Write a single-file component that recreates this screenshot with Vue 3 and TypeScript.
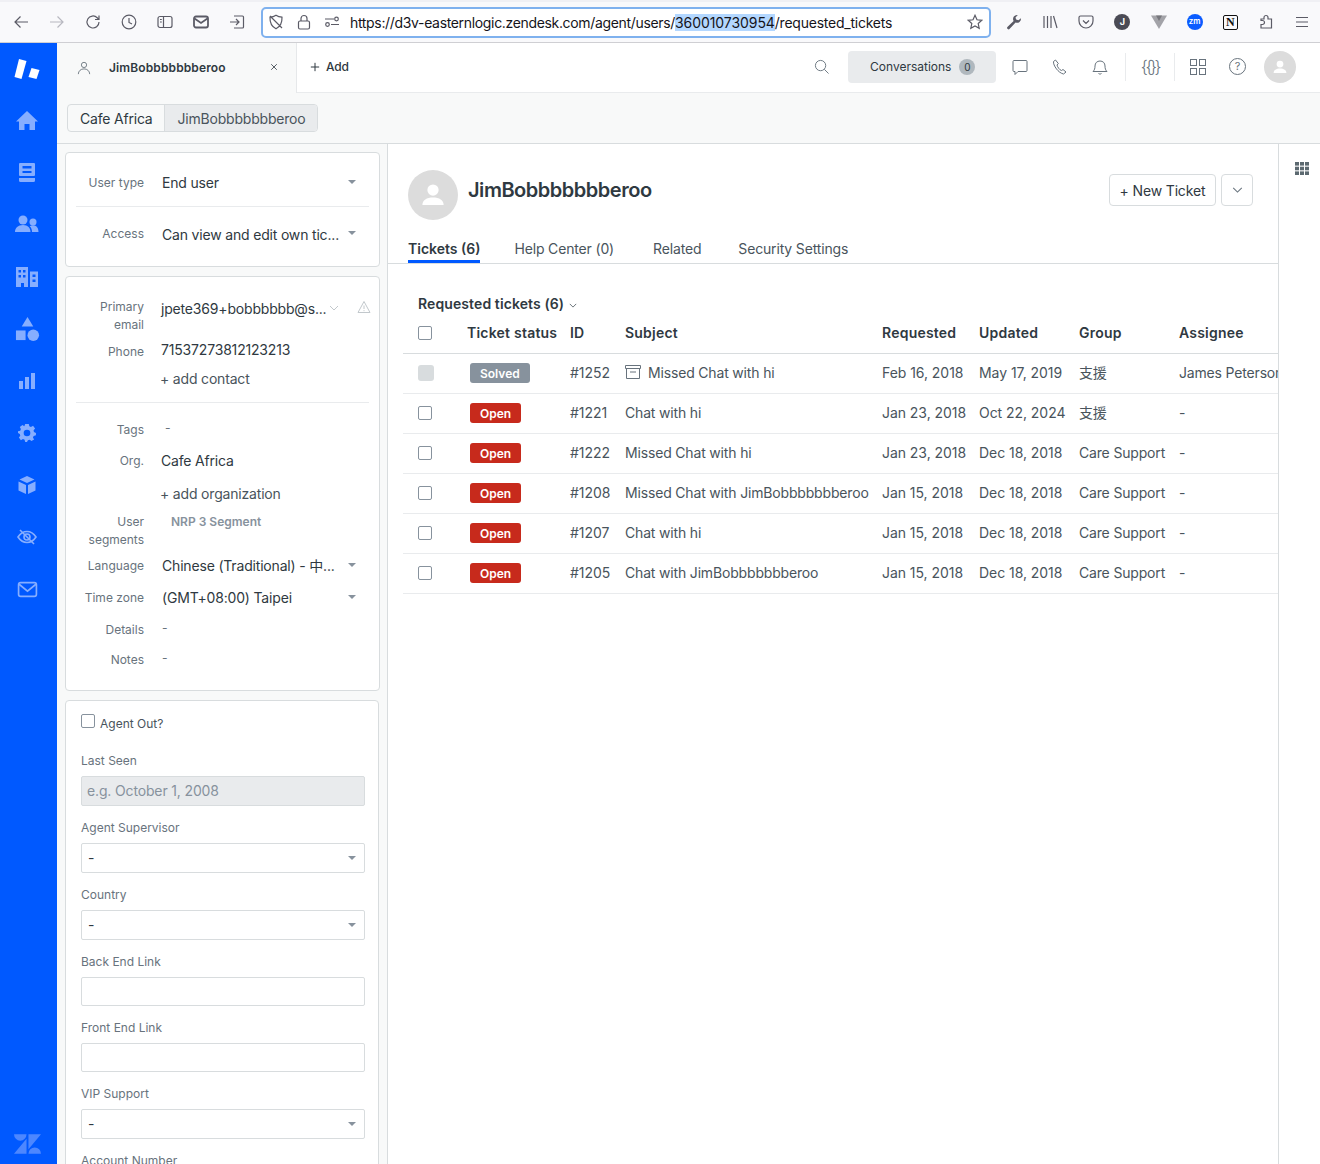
<script setup lang="ts">
interface Ticket {
  id: string;
  status: 'Solved' | 'Open';
  subject: string;
  requested: string;
  updated: string;
  group: string;
  assignee: string;
  archived?: boolean;
}

const tickets: Ticket[] = [
  { id: '#1252', status: 'Solved', subject: 'Missed Chat with hi', requested: 'Feb 16, 2018', updated: 'May 17, 2019', group: '支援', assignee: 'James Peterson', archived: true },
  { id: '#1221', status: 'Open', subject: 'Chat with hi', requested: 'Jan 23, 2018', updated: 'Oct 22, 2024', group: '支援', assignee: '-' },
  { id: '#1222', status: 'Open', subject: 'Missed Chat with hi', requested: 'Jan 23, 2018', updated: 'Dec 18, 2018', group: 'Care Support', assignee: '-' },
  { id: '#1208', status: 'Open', subject: 'Missed Chat with JimBobbbbbbberoo', requested: 'Jan 15, 2018', updated: 'Dec 18, 2018', group: 'Care Support', assignee: '-' },
  { id: '#1207', status: 'Open', subject: 'Chat with hi', requested: 'Jan 15, 2018', updated: 'Dec 18, 2018', group: 'Care Support', assignee: '-' },
  { id: '#1205', status: 'Open', subject: 'Chat with JimBobbbbbbberoo', requested: 'Jan 15, 2018', updated: 'Dec 18, 2018', group: 'Care Support', assignee: '-' },
];

const tabs = ['Tickets (6)', 'Help Center (0)', 'Related', 'Security Settings'];
const columns = ['Ticket status', 'ID', 'Subject', 'Requested', 'Updated', 'Group', 'Assignee'];
const bracesLabel = '{{}}';
</script>

<template>
  <div class="page">
    <!-- browser chrome -->
    <header class="browser">
      <div class="nav-icons">
        <svg class="b-icon" viewBox="0 0 16 16"><path d="M15 8H2M7.500 2.500 2 8l5.500 5.500" /></svg>
        <svg class="b-icon faded" viewBox="0 0 16 16"><path d="M1 8h13M8.500 2.500 14 8l-5.500 5.500" /></svg>
        <svg class="b-icon" viewBox="0 0 16 16"><path d="M14 8a6 6 0 1 1-1.800-4.300L14 5.500M14 1.500v4h-4" /></svg>
        <svg class="b-icon" viewBox="0 0 16 16"><circle cx="8" cy="8" r="6.800" /><path d="M8 4v4.500l3 1.500" /></svg>
        <svg class="b-icon" viewBox="0 0 16 16"><rect x="1" y="2.500" width="14" height="11" rx="2" /><path d="M6.500 2.500v11M3 5.500h1.800M3 8h1.800" /></svg>
        <svg class="b-icon heavy" viewBox="0 0 16 16"><rect x="1" y="2.500" width="14" height="11" rx="2" /><path d="m1.500 4.500 6.500 4.500 6.500-4.500" /></svg>
        <svg class="b-icon" viewBox="0 0 16 16"><path d="M5 2h8.500a1 1 0 0 1 1 1v10a1 1 0 0 1-1 1H5M1 8h9M7 5l3 3-3 3" /></svg>
      </div>
      <div class="urlbar">
        <svg class="b-icon" viewBox="0 0 16 16"><path d="M8 1.200c2 1.300 4 1.800 6 2 .200 5.500-1.800 9.500-6 11.600-4.200-2.100-6.200-6.100-6-11.600 2-.2 4-.7 6-2zM2 2l12 12" /></svg>
        <svg class="b-icon lock" viewBox="0 0 16 16"><rect x="2.500" y="7" width="11" height="8" rx="1.500" /><path d="M5 7V4.500a3 3 0 0 1 6 0V7" /></svg>
        <svg class="b-icon perm" viewBox="0 0 16 16"><circle cx="3.500" cy="10.500" r="1.800" /><circle cx="12.500" cy="5" r="1.800" /><path d="M1 5h9M7 10.500h8" /></svg>
        <span class="url">https://d3v-easternlogic.zendesk.com/agent/users/<mark>360010730954</mark><span class="url-tail">/requested_tickets</span></span>
        <svg class="b-icon star" viewBox="0 0 16 16"><path d="m8 1.300 2 4.500 4.800.5-3.600 3.200 1 4.800L8 12l-4.200 2.300 1-4.800L1.200 6.300 6 5.800z" /></svg>
      </div>
      <div class="ext-icons">
        <svg class="b-icon filled" viewBox="0 0 16 16"><path d="M15 4.300a4 4 0 0 1-5.400 4.200L3.700 14.800a1.400 1.400 0 0 1-2.300-1.700l6.200-6.200A4 4 0 0 1 11.800 1L9.500 3.400l.6 2.200 2.300.6z" /></svg>
        <svg class="b-icon" viewBox="0 0 16 16"><path d="M2 2v12M5.500 2v12M9 2v12M11.500 2l3.500 12" /></svg>
        <svg class="b-icon" viewBox="0 0 16 16"><path d="M2.500 2h11A1.500 1.500 0 0 1 15 3.500V7A7 7 0 0 1 1 7V3.500A1.500 1.500 0 0 1 2.500 2zM5 6.500l3 3 3-3" /></svg>
        <span class="ext-j">J</span>
        <svg class="ext-v" viewBox="0 0 16 16"><path d="M0 1.500h16L8 15z" fill="#a3a3a8" /><path d="M5 1.500h6L8 7z" fill="#77777c" /></svg>
        <span class="ext-zm">zm</span>
        <span class="ext-n">N</span>
        <svg class="b-icon" viewBox="0 0 16 16"><path d="M6 3.500a2 2 0 0 1 4 0V5h3.500v9H3v-3.500h1.500a2 2 0 0 0 0-4H3V5h3z" /></svg>
        <svg class="b-icon" viewBox="0 0 16 16"><path d="M2 3.500h12M2 8h12M2 12.500h12" /></svg>
      </div>
    </header>

    <div class="app">
      <!-- product rail -->
      <nav class="rail">
        <svg class="rail-logo" viewBox="0 0 26 22"><path d="M5 1 12.500 3 7.500 21 .5 19z" /><path d="m17.500 10 8 2-3 9-8-2z" /></svg>
        <div class="rail-icons">
          <svg width="22" height="22" viewBox="0 0 22 22"><path d="M11 1 0 11.500h3V20h5.500v-6h5v6H19v-8.500h3z" /></svg>
          <svg width="22" height="22" viewBox="0 0 22 22"><path d="M4 1h14a1 1 0 0 1 1 1v11a1 1 0 0 1-1 1H4a1 1 0 0 1-1-1V2a1 1 0 0 1 1-1zm2.500 3v2.500h9V4zm0 5v2h9V9zM3 16h16v2.500a1.500 1.500 0 0 1-1.500 1.500h-13A1.500 1.500 0 0 1 3 18.500z" fill-rule="evenodd" /></svg>
          <svg width="24" height="22" viewBox="0 0 24 22"><circle cx="8" cy="6" r="4.500" /><circle cx="18" cy="8" r="3.500" /><path d="M0 18c0-4 3-7 8-7s7.500 3 7.500 7zM17 18c0-2.500-.8-4.500-2.300-5.800 1-.6 2-.9 3.300-.9 3.500 0 5.500 2.800 5.500 6.700z" /></svg>
          <svg width="22" height="22" viewBox="0 0 22 22" fill-rule="evenodd"><path d="M0 1h12v20H8v-4H5v4H0zm2.500 3v2.500H5V4zm4.500 0v2.500h2.500V4zM2.500 9v2.500H5V9zM7 9v2.500h2.500V9z" /><path d="M14 5.500h8V21h-8zm2.500 3V11h3V8.500zm0 5V16h3v-2.500z" /></svg>
          <svg width="25" height="25" viewBox="0 0 26 26"><path d="M13 0l6 10H7z" /><rect x="1" y="14" width="10" height="10" /><circle cx="19" cy="19" r="6" /></svg>
          <svg width="18" height="18" viewBox="0 0 18 18"><rect x="1" y="9" width="4" height="8" /><rect x="7" y="5" width="4" height="12" /><rect x="13" y="1" width="4" height="16" /></svg>
          <svg width="18" height="18" viewBox="0 0 20 20"><path d="M8 0h4l.6 2.600 1.800.8L16.700 2 19 5l-1.700 2 .4 2 2.300 1-.1 2.600-2.500.6-.8 1.800 1.300 2.300L15 19l-2-1.500-2 .5-1 2H8l-.7-2.400-1.800-.8L3.200 18 1 15l1.500-2-.5-2L0 10V8l2.500-.6.700-1.800L2 3.200 5 1l2 1.500zM10 6.300a3.700 3.700 0 1 0 0 7.400 3.700 3.700 0 0 0 0-7.400z" fill-rule="evenodd" /></svg>
          <svg width="18" height="18" viewBox="0 0 18 18"><path d="M9 0l7.500 3.500L9 7 1.500 3.500zM.5 5.500 8 9v9L.5 14.500zM17.500 5.500 10 9v9l7.500-3.500z" /></svg>
          <svg class="line" width="20" height="20" viewBox="0 0 20 20"><path d="M1 10c2.500-3.800 5.500-5.500 9-5.500s6.500 1.700 9 5.500c-2.500 3.800-5.500 5.500-9 5.500S3.500 13.800 1 10z" /><circle cx="10" cy="10" r="3" /><path d="M3 3l14 14" /></svg>
          <svg class="line" width="21" height="21" viewBox="0 0 20 20"><rect x="1.500" y="3.500" width="17" height="13" rx="2" /><path d="m2 5 8 6.500L18 5" /></svg>
        </div>
        <svg class="rail-zd" viewBox="0 0 28 20"><path d="M0 0h13a6.500 6.500 0 0 1-13 0zM13 4.500V20H0zM15 15.500V0h13zM15 20a6.500 6.500 0 0 1 13 0z" /></svg>
      </nav>

      <div class="workspace">
        <div class="topbar">
          <div class="user-tab">
            <svg class="tab-user" viewBox="0 0 16 16"><circle cx="8" cy="4.500" r="3" /><path d="M1.500 15c0-3.500 2.800-6 6.500-6s6.500 2.500 6.500 6" /></svg>
            <span class="tab-name">JimBobbbbbbberoo</span>
            <svg class="tab-close" viewBox="0 0 10 10"><path d="m1.500 1.500 7 7M8.500 1.500l-7 7" /></svg>
          </div>
          <div class="topbar-main">
            <div class="add"><svg viewBox="0 0 12 12"><path d="M6 1v10M1 6h10" /></svg>Add</div>
            <div class="top-actions">
              <svg class="top-icon search" viewBox="0 0 16 16"><circle cx="7" cy="7" r="5.500" /><path d="m11 11 4.500 4.500" /></svg>
              <div class="conv">Conversations <span class="conv-count">0</span></div>
              <svg class="top-icon chat" viewBox="0 0 16 16"><path d="M2 1.500h12a1 1 0 0 1 1 1v9a1 1 0 0 1-1 1H6L3 15.500v-3H2a1 1 0 0 1-1-1v-9a1 1 0 0 1 1-1z" /></svg>
              <svg class="top-icon" viewBox="0 0 16 16"><path d="M3.500 1 1.500 2.500c-.5 4 5 11.500 10 12.500l2.500-2-3-2.500-1.500 1C7.500 11 5.500 8 5 6l1.300-1.500z" /></svg>
              <svg class="top-icon" viewBox="0 0 16 16"><path d="M1 12.500h14c-1.500-1.500-2-3-2-5.500 0-3-2-5-5-5S3 4 3 7c0 2.500-.5 4-2 5.500zM6.500 14.500c.5.700 2.500.7 3 0" /></svg>
              <span class="v-rule"></span>
              <span class="braces">{{ bracesLabel }}</span>
              <span class="v-rule"></span>
              <svg class="top-icon grid-i" viewBox="0 0 16 16"><rect x=".5" y=".5" width="6" height="6" /><rect x="9.500" y=".5" width="6" height="6" /><rect x=".5" y="9.500" width="6" height="6" /><rect x="9.500" y="9.500" width="6" height="6" /></svg>
              <span class="help">?</span>
              <span class="avatar small"><svg viewBox="0 0 24 24"><circle cx="12" cy="8" r="4.500" /><path d="M3.500 20c0-4 3.500-6 8.500-6s8.500 2 8.500 6z" /></svg></span>
            </div>
          </div>
        </div>

        <div class="subnav">
          <div class="crumbs">
            <span class="crumb">Cafe Africa</span>
            <span class="crumb current">JimBobbbbbbberoo</span>
          </div>
        </div>

        <div class="content">
          <aside class="side">
            <section class="card card-type">
              <div class="row row-select">
                <span class="label">User type</span>
                <span class="value">End user</span>
                <i class="caret"></i>
              </div>
              <hr />
              <div class="row row-select access">
                <span class="label">Access</span>
                <span class="value">Can view and edit own tic...</span>
                <i class="caret"></i>
              </div>
            </section>

            <section class="card card-info">
              <div class="row email">
                <span class="label">Primary<br />email</span>
                <span class="value tight">jpete369+bobbbbbb@s...</span>
                <svg class="chev" viewBox="0 0 10 6"><path d="m1 1 4 4 4-4" /></svg>
                <svg class="warn" viewBox="0 0 14 14"><path d="M7 1.500 13 12.500H1zM7 5.500v3.500M7 10.200v1" /></svg>
              </div>
              <div class="row phone">
                <span class="label">Phone</span>
                <span class="value tight">71537273812123213</span>
              </div>
              <div class="row add-row"><span class="label"></span><span class="value tight muted">+ add contact</span></div>
              <hr />
              <div class="row tags"><span class="label">Tags</span><span class="value dash">-</span></div>
              <div class="row org"><span class="label">Org.</span><span class="value tight">Cafe Africa</span></div>
              <div class="row add-org"><span class="label"></span><span class="value tight muted">+ add organization</span></div>
              <div class="row segments">
                <span class="label">User<br />segments</span>
                <span class="segment">NRP 3 Segment</span>
              </div>
              <div class="row lang"><span class="label">Language</span><span class="value">Chinese (Traditional) - 中...</span><i class="caret"></i></div>
              <div class="row zone"><span class="label">Time zone</span><span class="value">(GMT+08:00) Taipei</span><i class="caret"></i></div>
              <div class="row details"><span class="label">Details</span><span class="value dash">-</span></div>
              <div class="row notes"><span class="label">Notes</span><span class="value dash">-</span></div>
            </section>

            <section class="card card-fields">
              <label class="agent-out"><span class="box"></span>Agent Out?</label>
              <div class="field">
                <span class="f-label">Last Seen</span>
                <div class="f-input disabled">e.g. October 1, 2008</div>
              </div>
              <div class="field">
                <span class="f-label">Agent Supervisor</span>
                <div class="f-input select">-<i class="caret"></i></div>
              </div>
              <div class="field">
                <span class="f-label">Country</span>
                <div class="f-input select">-<i class="caret"></i></div>
              </div>
              <div class="field">
                <span class="f-label">Back End Link</span>
                <div class="f-input text"></div>
              </div>
              <div class="field">
                <span class="f-label">Front End Link</span>
                <div class="f-input text"></div>
              </div>
              <div class="field">
                <span class="f-label">VIP Support</span>
                <div class="f-input select">-<i class="caret"></i></div>
              </div>
              <div class="field">
                <span class="f-label">Account Number</span>
              </div>
            </section>
          </aside>

          <main class="main">
            <div class="profile">
              <span class="avatar large"><svg viewBox="0 0 24 24"><circle cx="12" cy="8" r="4.500" /><path d="M3.500 20c0-4 3.500-6 8.500-6s8.500 2 8.500 6z" /></svg></span>
              <h1>JimBobbbbbbberoo</h1>
              <button class="btn new-ticket">+ New Ticket</button>
              <button class="btn more"><svg viewBox="0 0 12 7"><path d="m1 1 5 5 5-5" /></svg></button>
            </div>

            <div class="tabs">
              <span v-for="(tab, i) in tabs" :key="tab" class="tab" :class="{ active: i === 0 }">{{ tab }}</span>
            </div>

            <div class="view-title">
              Requested tickets (6)
              <svg viewBox="0 0 10 6"><path d="m1 1 4 4 4-4" /></svg>
            </div>

            <div class="tbl">
              <div class="tr head">
                <span class="check"></span>
                <span v-for="col in columns" :key="col">{{ col }}</span>
              </div>
              <div v-for="t in tickets" :key="t.id" class="tr">
                <span class="check" :class="{ locked: t.archived }"></span>
                <span><b class="badge" :class="t.status.toLowerCase()">{{ t.status }}</b></span>
                <span class="num">{{ t.id }}</span>
                <span class="subject">
                  <svg v-if="t.archived" class="archive" viewBox="0 0 16 14"><path d="M.5.500h15v3H.5zM1.500 3.500v10h13v-10M5 7h6" /></svg>
                  {{ t.subject }}
                </span>
                <span class="num">{{ t.requested }}</span>
                <span class="num">{{ t.updated }}</span>
                <span>{{ t.group }}</span>
                <span class="assignee">{{ t.assignee }}</span>
              </div>
            </div>
          </main>

          <aside class="apps">
            <svg viewBox="0 0 14 13"><rect x="0" y="0" width="4" height="3.600" /><rect x="5" y="0" width="4" height="3.600" /><rect x="10" y="0" width="4" height="3.600" /><rect x="0" y="4.700" width="4" height="3.600" /><rect x="5" y="4.700" width="4" height="3.600" /><rect x="10" y="4.700" width="4" height="3.600" /><rect x="0" y="9.400" width="4" height="3.600" /><rect x="5" y="9.400" width="4" height="3.600" /><rect x="10" y="9.400" width="4" height="3.600" /></svg>
          </aside>
        </div>
      </div>
    </div>
  </div>
</template>

<style>
html, body {
  margin: 0;
  height: 100%;
  overflow: hidden;
}
</style>

<style scoped>
.page {
  height: 1164px;
  display: flex;
  flex-direction: column;
  overflow: hidden;
  font-family: Inter, "Noto Sans CJK TC", sans-serif;
  font-size: 14px;
  color: #2f3941;
  background: #fff;
}

svg {
  display: block;
  flex: none;
}

/* browser chrome */
.browser {
  height: 43px;
  box-sizing: border-box;
  display: flex;
  align-items: center;
  background: #f9f9fb;
  border-top: 2px solid #f0f0f4;
  border-bottom: 1px solid #cfcfd3;
}

.b-icon {
  width: 16px;
  height: 16px;
  fill: none;
  stroke: #5b5b66;
  stroke-width: 1.200;
}

.b-icon.faded {
  stroke: #b8b8c0;
}

.b-icon.heavy {
  stroke-width: 1.800;
}

.b-icon.filled {
  fill: #5b5b66;
  stroke: none;
}

.nav-icons {
  width: 261px;
  box-sizing: border-box;
  padding: 0 16px 0 13px;
  display: flex;
  justify-content: space-between;
  align-items: center;
}

.urlbar {
  width: 730px;
  height: 31px;
  box-sizing: border-box;
  display: flex;
  align-items: center;
  padding: 0 6px 0 5px;
  background: #fff;
  border: 2px solid #7fb1ee;
  border-radius: 5px;
}

.urlbar .lock {
  margin-left: 12px;
}

.urlbar .perm {
  margin: 0 0 0 12px;
}

.url {
  margin-left: 10px;
  flex: 1;
  font-size: 14px;
  letter-spacing: -0.335px;
  color: #15141a;
  white-space: nowrap;
}

.url mark {
  background: #b3d7ff;
  color: inherit;
  letter-spacing: -0.07px;
}

.url-tail {
  letter-spacing: -0.235px;
}

.ext-icons {
  flex: 1;
  box-sizing: border-box;
  padding: 0 10px 0 15px;
  display: flex;
  justify-content: space-between;
  align-items: center;
}

.ext-j {
  width: 16px;
  height: 16px;
  border-radius: 50%;
  background: #4b4b55;
  color: #fff;
  font-size: 9px;
  font-weight: 700;
  text-align: center;
  line-height: 16px;
}

.ext-v {
  width: 16px;
  height: 16px;
}

.ext-zm {
  width: 16px;
  height: 16px;
  border-radius: 50%;
  background: #0b5cff;
  color: #fff;
  font-size: 8px;
  font-weight: 600;
  text-align: center;
  line-height: 15px;
}

.ext-n {
  width: 13px;
  height: 13px;
  border: 1.500px solid #111;
  border-radius: 2px;
  font-family: "Liberation Serif", serif;
  font-size: 12px;
  font-weight: 700;
  line-height: 13px;
  text-align: center;
  color: #111;
}

/* app frame */
.app {
  flex: 1;
  min-height: 0;
  display: flex;
}

.rail {
  width: 57px;
  flex: none;
  box-sizing: border-box;
  padding-right: 3px;
  display: flex;
  flex-direction: column;
  align-items: center;
  background: #0059ff;
}

.rail-logo {
  width: 26px;
  height: 22px;
  margin-top: 15px;
  fill: #fff;
}

.rail-icons {
  margin-top: 15px;
  height: 520px;
  display: grid;
  grid-auto-rows: 52px;
  justify-items: center;
  align-items: center;
}

.rail-icons svg {
  fill: #86aeff;
}

.rail-icons svg.line {
  fill: none;
  stroke: #86aeff;
  stroke-width: 1.600;
}

.rail-zd {
  width: 27px;
  height: 20px;
  margin-top: auto;
  margin-bottom: 10px;
  fill: #4d87ff;
}

.workspace {
  flex: 1;
  min-width: 0;
  display: flex;
  flex-direction: column;
  background: #f8f9f9;
}

.topbar {
  height: 50px;
  flex: none;
  display: flex;
}

.user-tab {
  width: 240px;
  flex: none;
  box-sizing: border-box;
  display: flex;
  align-items: center;
  padding: 0 18px 2px 20px;
  border-right: 1px solid #e6e8ea;
}

.tab-user {
  width: 14px;
  height: 14px;
  margin-top: 2px;
  fill: none;
  stroke: #68737d;
  stroke-width: 1;
}

.tab-name {
  margin-left: 18px;
  font-size: 12px;
  font-weight: 600;
  letter-spacing: 0.12px;
  flex: 1;
}

.tab-close {
  width: 8px;
  height: 8px;
  fill: none;
  stroke: #2f3941;
  stroke-width: 1;
}

.topbar-main {
  flex: 1;
  display: flex;
  align-items: center;
  justify-content: space-between;
  background: #fff;
  border-bottom: 1px solid #e9ebed;
  padding: 0 24px 2px 13px;
}

.add {
  display: flex;
  align-items: center;
  gap: 6px;
  font-size: 12px;
  font-weight: 500;
  letter-spacing: -0.2px;
}

.add svg {
  width: 10px;
  height: 10px;
  fill: none;
  stroke: #2f3941;
  stroke-width: 1.200;
}

.top-actions {
  display: flex;
  align-items: center;
}

.top-icon {
  width: 16px;
  height: 16px;
  fill: none;
  stroke: #68737d;
  stroke-width: 1;
  margin-left: 24px;
}

.top-icon.search {
  width: 15px;
  height: 15px;
  margin: 0 19px 0 0;
}

.top-icon.chat {
  margin-left: 16px;
}

.conv {
  width: 148px;
  height: 32px;
  box-sizing: border-box;
  display: flex;
  align-items: center;
  padding-left: 22px;
  gap: 8px;
  font-size: 12px;
  background: #e9ebed;
  border-radius: 4px;
}

.conv-count {
  width: 16px;
  height: 16px;
  border-radius: 50%;
  background: #b0b8be;
  font-size: 10px;
  line-height: 16px;
  text-align: center;
}

.v-rule {
  width: 1px;
  height: 28px;
  background: #e9ebed;
  margin-left: 17px;
}

.braces {
  width: 48px;
  text-align: center;
  font-size: 17px;
  font-weight: 300;
  letter-spacing: -2.500px;
  color: #68737d;
}

.v-rule + .braces + .v-rule {
  margin-left: 0;
}

.top-icon.grid-i {
  margin-left: 15px;
}

.help {
  margin-left: 23px;
  width: 17px;
  height: 17px;
  box-sizing: border-box;
  border: 1px solid #68737d;
  border-radius: 50%;
  font-size: 11px;
  line-height: 15px;
  text-align: center;
  color: #68737d;
}

.avatar {
  display: block;
  border-radius: 50%;
  background: #dcdcdc;
  overflow: hidden;
  flex: none;
}

.avatar svg {
  fill: #fff;
}

.avatar.small {
  width: 32px;
  height: 32px;
  margin-left: 18px;
}

.avatar.small svg {
  width: 18px;
  height: 18px;
  margin: 7px;
}

.subnav {
  height: 51px;
  flex: none;
  box-sizing: border-box;
  padding: 11px 10px 0;
  border-bottom: 1px solid #d8dcde;
}

.crumbs {
  display: inline-flex;
  height: 28px;
  border: 1px solid #d8dcde;
  border-radius: 4px;
  overflow: hidden;
  box-sizing: border-box;
  background: #f8f9f9;
}

.crumb {
  padding: 0 12px;
  line-height: 27px;
  font-size: 14px;
  letter-spacing: -0.2px;
}

.crumb.current {
  background: #e9ebed;
  border-left: 1px solid #d8dcde;
  color: #49545c;
}

/* left column */
.content {
  flex: 1;
  min-height: 0;
  display: flex;
}

.side {
  width: 331px;
  flex: none;
  box-sizing: border-box;
  padding: 8px 8px 0;
  overflow: hidden;
  border-right: 1px solid #d8dcde;
}

.card {
  box-sizing: border-box;
  width: 315px;
  background: #fff;
  border: 1px solid #d8dcde;
  border-radius: 4px;
  padding: 0 10px;
  margin-bottom: 9px;
}

.card hr {
  margin: 0;
  border: 0;
  border-top: 1px solid #e9ebed;
}

.row {
  position: relative;
  display: flex;
  align-items: flex-start;
}

.label {
  width: 68px;
  flex: none;
  text-align: right;
  font-size: 12px;
  line-height: 18px;
  color: #68737d;
}

.value {
  margin-left: 18px;
  color: #2f3941;
  line-height: 20px;
  letter-spacing: -0.18px;
  white-space: nowrap;
  flex: 1;
}

.value.tight {
  margin-left: 17px;
}

.value.muted {
  margin-left: 16px;
  color: #49545c;
}

.value.dash {
  color: #68737d;
  font-size: 12px;
  line-height: 18px;
}

.caret {
  display: block;
  width: 0;
  height: 0;
  border-left: 4.500px solid transparent;
  border-right: 4.500px solid transparent;
  border-top: 4.500px solid #87929d;
  position: absolute;
  right: 13px;
  top: 7px;
}

.card-type {
  height: 115px;
  padding-top: 20px;
}

.card-type .row {
  align-items: center;
  height: 20px;
}

.card-type .row .label {
  line-height: 20px;
}

.card-type hr {
  margin-top: 13px;
}

.card-type .access {
  margin-top: 17px;
}

.card-type .access .value {
  padding-top: 1px;
}

.card-info {
  height: 415px;
  padding-top: 21px;
}

.email {
  height: 36px;
}

.email .value {
  line-height: 18px;
  margin-top: 2px;
}

.chev {
  position: absolute;
  right: 30px;
  top: 7px;
  width: 10px;
  height: 6px;
  fill: none;
  stroke: #c2c8cc;
  stroke-width: 1;
}

.warn {
  position: absolute;
  right: -2px;
  top: 2px;
  width: 14px;
  height: 14px;
  fill: none;
  stroke: #c2c8cc;
  stroke-width: 1;
}

.phone {
  margin-top: 8px;
  height: 20px;
}

.phone .label {
  line-height: 20px;
}

.phone .value {
  margin-top: -2px;
}

.add-row {
  margin-top: 7px;
  height: 20px;
}

.card-info hr {
  margin-top: 13px;
}

.tags {
  margin-top: 18px;
  height: 18px;
}

.tags .value {
  line-height: 14px;
  margin-left: 21px;
}

.org {
  margin-top: 12px;
  height: 20px;
}

.org .label {
  line-height: 20px;
}

.add-org {
  margin-top: 13px;
  height: 20px;
}

.segments {
  margin-top: 9px;
  height: 36px;
}

.segment {
  margin: 1px 0 0 27px;
  font-size: 12px;
  font-weight: 600;
  line-height: 16px;
  color: #87929d;
}

.lang {
  margin-top: 7px;
  height: 20px;
}

.lang .label,
.zone .label {
  line-height: 20px;
}

.zone {
  margin-top: 12px;
  height: 20px;
}

.details {
  margin-top: 13px;
  height: 18px;
}

.notes {
  margin-top: 12px;
  height: 18px;
}

.details .value,
.notes .value {
  line-height: 14px;
}

.card-fields {
  width: 314px;
  height: 600px;
  padding: 13px 13px 0 15px;
  margin-bottom: 0;
  margin-top: 9px;
}

.agent-out {
  display: flex;
  align-items: center;
  gap: 5px;
  height: 18px;
  font-size: 12px;
  color: #49545c;
  margin-bottom: 20px;
}

.box {
  width: 14px;
  height: 14px;
  box-sizing: border-box;
  border: 1.500px solid #87929d;
  border-radius: 2px;
  margin-top: -4px;
}

.field {
  margin-bottom: 13px;
}

.f-label {
  display: block;
  height: 18px;
  line-height: 18px;
  font-size: 12px;
  color: #68737d;
  margin-bottom: 6px;
}

.f-input {
  position: relative;
  height: 30px;
  box-sizing: border-box;
  border: 1px solid #d8dcde;
  border-radius: 2px;
  padding: 0 5px 0 6px;
  line-height: 28px;
  color: #2f3941;
  background: #fff;
}

.f-input.disabled {
  padding-left: 5px;
  background: #e9ebed;
  color: #87929d;
  border-color: #d8dcde;
  letter-spacing: -0.15px;
}

.f-input.text {
  height: 29px;
}

.f-input .caret {
  top: 12px;
  right: 8px;
}

/* main panel */
.main {
  width: 890px;
  flex: none;
  background: #fff;
  overflow: hidden;
}

.profile {
  display: flex;
  align-items: center;
  height: 92px;
  box-sizing: border-box;
  padding: 0 25px 0 20px;
}

.avatar.large {
  width: 50px;
  height: 50px;
  margin-top: 9px;
}

.avatar.large svg {
  width: 30px;
  height: 30px;
  margin: 10px;
}

h1 {
  margin: 0 0 0 10px;
  flex: 1;
  font-size: 20px;
  font-weight: 600;
  letter-spacing: -0.475px;
  color: #2f3941;
}

.btn {
  height: 32px;
  box-sizing: border-box;
  border: 1px solid #d8dcde;
  border-radius: 4px;
  background: #fff;
  font: inherit;
  letter-spacing: -0.15px;
  color: #2f3941;
  padding: 0;
}

.new-ticket {
  width: 107px;
}

.more {
  width: 32px;
  margin-left: 5px;
  display: flex;
  align-items: center;
  justify-content: center;
}

.more svg {
  width: 11px;
  height: 6px;
  fill: none;
  stroke: #68737d;
  stroke-width: 1.200;
}

.tabs {
  height: 28px;
  box-sizing: border-box;
  padding-left: 20px;
  display: flex;
  gap: 34px;
  border-bottom: 1px solid #d8dcde;
}

.tab {
  height: 27px;
  box-sizing: border-box;
  line-height: 26px;
  letter-spacing: -0.16px;
  color: #49545c;
}

.tab.active {
  font-weight: 600;
  letter-spacing: 0;
  border-bottom: 3px solid #0059ff;
  color: #2f3941;
}

.tab:nth-child(3) {
  margin-left: 5px;
}

.tab:nth-child(4) {
  margin-left: 3px;
}

.view-title {
  margin: 31px 0 0 30px;
  height: 18px;
  display: flex;
  align-items: center;
  gap: 5px;
  font-weight: 600;
  line-height: 18px;
  letter-spacing: 0.1px;
}

.view-title svg {
  width: 8px;
  height: 5px;
  margin-top: 3px;
  fill: none;
  stroke: #49545c;
  stroke-width: 1;
}

.tbl {
  margin: 1px 0 0 15px;
  width: 1000px;
}

.tr {
  display: grid;
  grid-template-columns: 49px 103px 55px 257px 97px 100px 100px 239px;
  align-items: center;
  height: 40px;
  box-sizing: border-box;
  padding: 0 0 2px 15px;
  border-bottom: 1px solid #e9ebed;
  color: #49545c;
  line-height: 20px;
  letter-spacing: -0.17px;
  white-space: nowrap;
}

.tr.head {
  border-bottom-color: #d8dcde;
  font-weight: 600;
  letter-spacing: 0.22px;
  color: #2f3941;
}

.tr .num {
  letter-spacing: -0.05px;
}

.check {
  width: 14px;
  height: 14px;
  box-sizing: border-box;
  border: 1.500px solid #87929d;
  border-radius: 2px;
}

.check.locked {
  width: 16px;
  height: 16px;
  border: 0;
  border-radius: 3px;
  background: #d8dcde;
}

.badge {
  display: inline-block;
  margin-left: 3px;
  height: 20px;
  line-height: 21px;
  padding: 0 10px;
  border-radius: 3px;
  font-size: 12px;
  font-weight: 600;
  letter-spacing: 0;
  color: #fff;
  vertical-align: middle;
}

.badge.solved {
  background: #87929d;
}

.badge.open {
  background: #c72a1c;
}

.subject {
  display: flex;
  align-items: center;
  gap: 7px;
}

.archive {
  width: 16px;
  height: 14px;
  fill: none;
  stroke: #68737d;
  stroke-width: 1;
  margin-top: -2px;
}

.assignee {
  color: #49545c;
}

.apps {
  flex: 1;
  background: #fff;
  border-left: 1px solid #d8dcde;
  padding: 18px 0 0 16px;
}

.apps svg {
  width: 14px;
  height: 13px;
  fill: #5c6970;
}
</style>
